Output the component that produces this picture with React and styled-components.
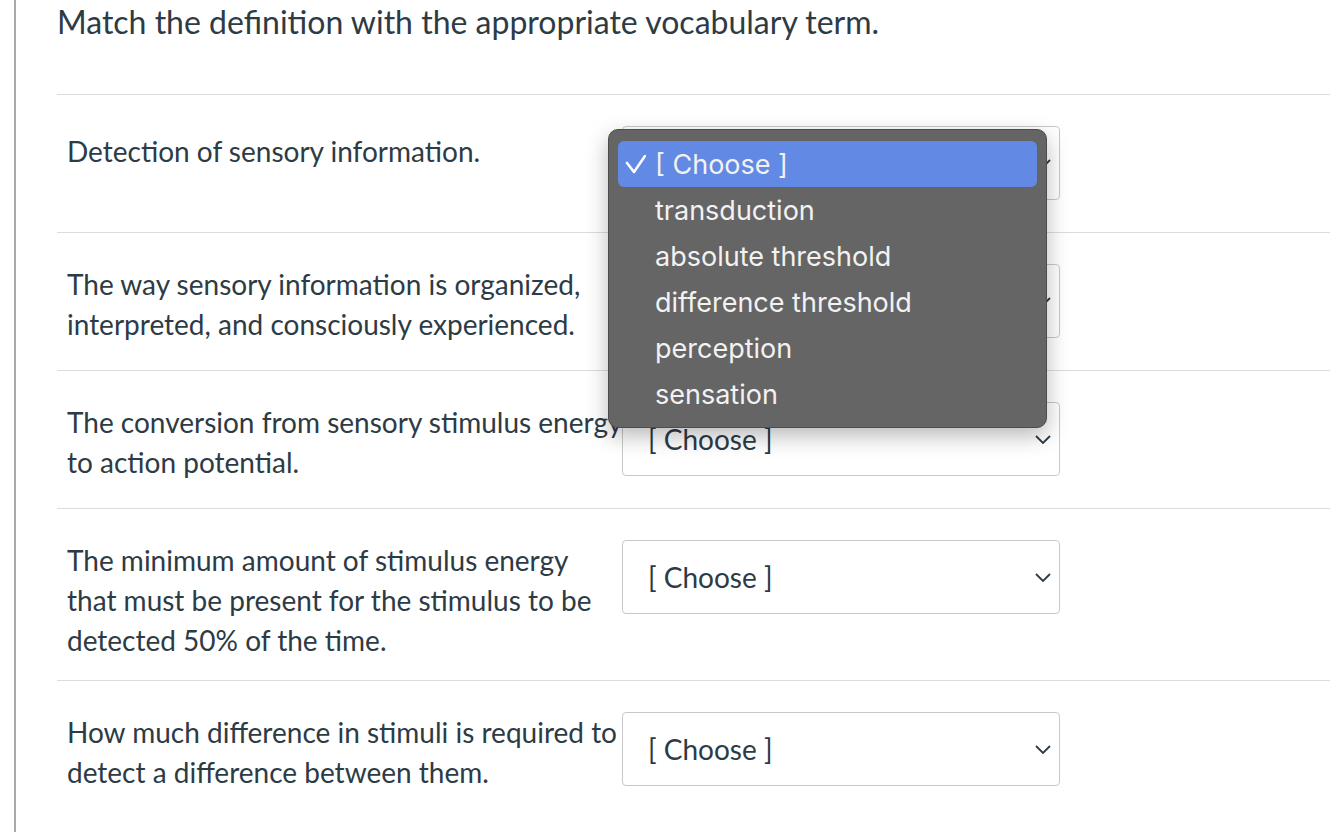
import React from 'react';
import styled, { createGlobalStyle } from 'styled-components';

const GlobalStyle = createGlobalStyle`
  body {
    margin: 0;
    background: #fff;
    font-family: Lato, "Open Sans", sans-serif;
    color: #2d3b45;
  }
`;

const Page = styled.div`
  margin-left: 14px;
  border-left: 2px solid #a9a9a9;
  min-height: 100vh;
  padding-left: 41px;
  box-sizing: border-box;
`;

const Title = styled.h1`
  margin: 0;
  padding-top: 2px;
  font-size: 32px;
  font-weight: 400;
  line-height: 40px;
  height: 92px;
  color: #2d3b45;
`;

const Row = styled.div`
  display: flex;
  align-items: flex-start;
  border-top: 1px solid #dcdcdc;
  padding: 19px 0 20px 10px;
`;

const Definition = styled.div`
  width: 555px;
  margin-top: ${(p) => (p.$single ? '17px' : '12px')};
  font-size: 28px;
  line-height: 40px;
  white-space: nowrap;
  flex-shrink: 0;
`;

const SelectBox = styled.div`
  position: relative;
  box-sizing: border-box;
  width: 438px;
  height: 74px;
  margin: 12px 0;
  display: flex;
  align-items: center;
  justify-content: space-between;
  padding: 0 8px 0 25px;
  border: 1px solid #c8c8c8;
  border-radius: 4px;
  font-size: 28px;
  background: #fff;
`;

const Chevron = () => (
  <svg width="16" height="9" viewBox="0 0 16 9">
    <polyline points="1,1 8,8 15,1" fill="none" stroke="#2d3b45" strokeWidth="1.8" />
  </svg>
);

const Menu = styled.div`
  position: absolute;
  left: -15px;
  top: 2px;
  width: 439px;
  box-sizing: border-box;
  padding: 11px 9px 10px;
  background: #656565;
  border: 1px solid #4d4d4d;
  border-radius: 10px;
  box-shadow: 0 8px 22px rgba(0, 0, 0, 0.28);
  z-index: 10;
`;

const Option = styled.div`
  position: relative;
  height: 46px;
  display: flex;
  align-items: center;
  padding-left: 37px;
  border-radius: 6px;
  font-family: Inter, "Noto Sans", sans-serif;
  font-size: 27px;
  color: #f2f2f2;
  background: ${(p) => (p.$active ? '#6289e3' : 'transparent')};
`;

const Check = styled.svg`
  position: absolute;
  left: 6px;
  top: 14px;
`;

const rows = [
  ['Detection of sensory information.'],
  ['The way sensory information is organized,', 'interpreted, and consciously experienced.'],
  ['The conversion from sensory stimulus energy', 'to action potential.'],
  ['The minimum amount of stimulus energy', 'that must be present for the stimulus to be', 'detected 50% of the time.'],
  ['How much difference in stimuli is required to', 'detect a difference between them.'],
];

const options = ['[ Choose ]', 'transduction', 'absolute threshold', 'difference threshold', 'perception', 'sensation'];

export default function App() {
  return (
    <>
      <GlobalStyle />
      <Page>
        <Title>Match the definition with the appropriate vocabulary term.</Title>
        {rows.map((lines, i) => (
          <Row key={i}>
            <Definition $single={lines.length === 1}>
              {lines.map((l, j) => (
                <div key={j}>{l}</div>
              ))}
            </Definition>
            <SelectBox>
              <span>[ Choose ]</span>
              <Chevron />
              {i === 0 && (
                <Menu>
                  {options.map((o, k) => (
                    <Option key={o} $active={k === 0}>
                      {k === 0 && (
                        <Check width="22" height="19" viewBox="0 0 22 19">
                          <path d="M3 8 L10 17 L21 1" fill="none" stroke="#fff" strokeWidth="2.6" strokeLinecap="round" strokeLinejoin="round" />
                        </Check>
                      )}
                      {o}
                    </Option>
                  ))}
                </Menu>
              )}
            </SelectBox>
          </Row>
        ))}
      </Page>
    </>
  );
}
